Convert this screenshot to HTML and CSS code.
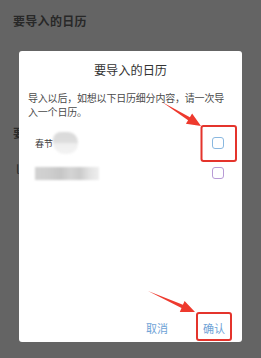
FILE: index.html
```html
<!DOCTYPE html>
<html lang="zh">
<head>
<meta charset="utf-8">
<link rel="stylesheet" href="styles.css">
</head>
<body>
<div class="page">
  <div class="bg-title">要导入的日历</div>
  <div class="bg-line bg-line-1">要</div>
  <div class="bg-line bg-line-2">l</div>
</div>
<div class="dialog">
  <div class="dlg-title">要导入的日历</div>
  <div class="dlg-body">导入以后，如想以下日历细分内容，请一次导入一个日历。</div>
  <div class="rows">
    <div class="row">
      <div class="label"><span>春节</span><span class="blur blur-a"></span></div>
      <span class="check check-blue"></span>
    </div>
    <div class="row">
      <div class="label"><span class="blur blur-b"></span></div>
      <span class="check check-purple"></span>
    </div>
  </div>
  <div class="footer">
    <span class="btn">取消</span>
    <span class="btn">确认</span>
  </div>
</div>
<svg class="annot" width="261" height="358" viewBox="0 0 261 358">
  <rect x="201.5" y="126" width="34.5" height="35" rx="2" fill="none" stroke="#e4342c" stroke-width="2"/>
  <rect x="197" y="313" width="34" height="27" rx="2" fill="none" stroke="#e4342c" stroke-width="2"/>
  <polygon fill="#ee3a2e" points="162,102 189.9,117.2 192.1,113.6 201,126 185.9,123.8 188.1,120.2"/>
  <polygon fill="#ee3a2e" points="148,291 182.9,304.7 184.6,300.9 195,312 179.8,311.9 181.5,308.1"/>
</svg>
</body>
</html>
```
FILE: styles.css
```css
html, body {
  margin: 0;
  padding: 0;
}
body {
  width: 261px;
  height: 358px;
  background: #646464;
  font-family: "Noto Sans CJK SC", "Noto Sans", sans-serif;
  overflow: hidden;
  position: relative;
}
.page {
  padding: 13px 0 0 13px;
}
.bg-title {
  font-size: 12px;
  letter-spacing: 0.3px;
  line-height: 16px;
  color: #282828;
  font-weight: 700;
}
.bg-line {
  font-size: 12px;
  line-height: 16px;
  color: #2a2a2a;
  font-weight: 700;
}
.bg-line-1 {
  margin-top: 96px;
}
.bg-line-2 {
  margin-top: 20px;
  padding-left: 3px;
  font-weight: 400;
}
.dialog {
  position: absolute;
  left: 19px;
  top: 51px;
  width: 223px;
  height: 291px;
  background: #ffffff;
  border-radius: 3px;
  display: flex;
  flex-direction: column;
  box-sizing: border-box;
}
.dlg-title {
  margin-top: 11px;
  text-align: center;
  font-size: 12.2px;
  line-height: 16px;
  color: #333333;
}
.dlg-body {
  margin-top: 13px;
  padding: 0 14px 0 9px;
  font-size: 10px;
  letter-spacing: -0.2px;
  line-height: 14px;
  color: #4a4a4a;
}
.rows {
  margin-top: 13px;
  display: flex;
  flex-direction: column;
  gap: 8px;
}
.row {
  height: 22px;
  display: flex;
  align-items: center;
  justify-content: space-between;
  padding: 0 18px 0 16px;
}
.label {
  display: flex;
  align-items: center;
  font-size: 9px;
  color: #3a3a3a;
}
.blur {
  display: inline-block;
  filter: blur(1px);
}
.blur-a {
  width: 25px;
  height: 22px;
  border-radius: 8px 10px 10px 12px;
  background: linear-gradient(180deg, #dadada 0%, #dddddd 45%, #efefef 55%, #f3f3f3 100%);
}
.blur-b {
  width: 64px;
  height: 13px;
  background: linear-gradient(90deg, #d2d2d2 0%, #cfcfcf 20%, #c6c6c6 40%, #d4d4d4 55%, #cbcbcb 70%, #e2e2e2 85%, #eeeeee 100%);
}
.check {
  width: 12px;
  height: 12px;
  box-sizing: border-box;
  border-radius: 3px;
  border: 1.5px solid #8ab8e0;
}
.check-purple {
  border-color: #b89bd6;
}
.footer {
  margin-top: auto;
  margin-bottom: 6px;
  display: flex;
  justify-content: flex-end;
  gap: 35px;
  padding-right: 17px;
}
.btn {
  font-size: 11px;
  line-height: 16px;
  color: #6ea2d6;
}
.annot {
  position: absolute;
  left: 0;
  top: 0;
}
```
